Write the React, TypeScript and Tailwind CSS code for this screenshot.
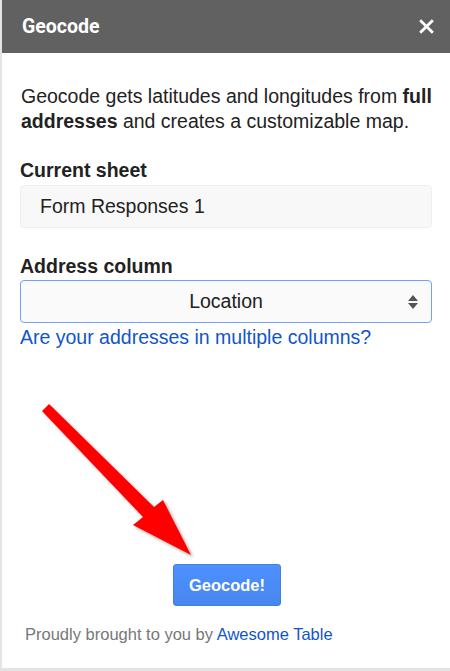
export default function App() {
  return (
    <div className="w-[450px] h-[671px] flex flex-col bg-white border-l-2 border-b-[3px] border-[#e3e3e3] font-['Liberation_Sans',Arial,sans-serif] text-[#222]">
      <div className="h-[53px] shrink-0 bg-[#616161] flex items-center justify-between pl-5 pr-4">
        <span className="font-['Roboto',sans-serif] font-bold text-[19.5px] text-white">Geocode</span>
        <svg width="15" height="15" viewBox="0 0 14 14">
          <path d="M2 2 L12 12 M12 2 L2 12" stroke="#fff" strokeWidth="2.6" strokeLinecap="square" />
        </svg>
      </div>

      <div className="flex-1 flex flex-col px-[18px] pt-[31px]">
        <p className="text-[19.5px] leading-[25px] pl-[1px]">
          Geocode gets latitudes and longitudes from <b>full addresses</b> and creates a customizable map.
        </p>

        <div className="mt-[25px] font-bold text-[19.5px] leading-[22px]">Current sheet</div>
        <div className="mt-[4px] h-[43px] rounded-[4px] border border-[#efefef] bg-[#f8f8f8] flex items-center pl-[19px] text-[19.5px]">
          Form Responses 1
        </div>

        <div className="mt-[27px] font-bold text-[19.5px] leading-[22px]">Address column</div>
        <div className="relative mt-[3px] h-[43px] rounded-[4px] border border-[#6fa3f7] bg-[#fafafa] flex items-center justify-center text-[19.5px]">
          Location
          <svg className="absolute right-[13px] top-[14px]" width="10" height="14" viewBox="0 0 10 14">
            <path d="M5 0 L10 6 L0 6 Z M0 8 L10 8 L5 14 Z" fill="#555" />
          </svg>
        </div>
        <a className="mt-[2px] text-[19.5px] leading-[24px] text-[#1155cc]">Are your addresses in multiple columns?</a>

        <div className="relative flex-1">
          <svg className="absolute left-0 top-[47px]" width="180" height="170" viewBox="20 396 180 170">
            <defs>
              <filter id="sh" x="-20%" y="-20%" width="140%" height="140%">
                <feDropShadow dx="2" dy="2" stdDeviation="1.5" floodColor="#000" floodOpacity="0.35" />
              </filter>
            </defs>
            <g filter="url(#sh)">
              <path
                d="M42 411 L49 404 L154 507 L163 500 L191 555 L133 525 L143 517 L42 411 Z"
                fill="#ff0000"
              />
            </g>
          </svg>
        </div>

        <div className="flex justify-center pl-[2px]">
          <button className="w-[108px] h-[42px] rounded-[3px] border border-[#3f7fe8] bg-gradient-to-b from-[#4d90fe] to-[#4787ed] text-white font-bold text-[16.5px]">
            Geocode!
          </button>
        </div>

        <div className="mt-[18px] mb-[24px] pl-[5px] text-[16.5px] leading-[20px] text-[#777]">
          Proudly brought to you by <a className="text-[#1155cc]">Awesome Table</a>
        </div>
      </div>
    </div>
  );
}
